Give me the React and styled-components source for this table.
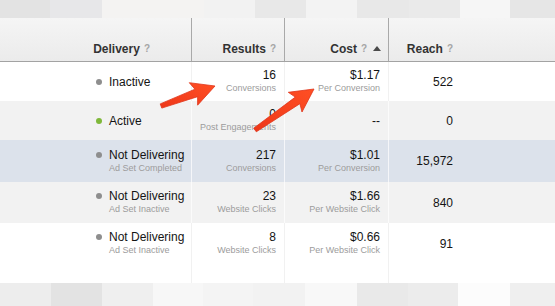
import styled, { createGlobalStyle } from "styled-components";

const GlobalStyle = createGlobalStyle`
    html, body {
        margin: 0;
        padding: 0;
        background: #ffffff;
    }
    body {
        font-family: "Liberation Sans", Arial, Helvetica, sans-serif;
        -webkit-font-smoothing: antialiased;
    }
`;

const colunas = "192px 93px 104px 72px 1fr";

const topoBlocos = [
    [50, "#e3e3e3"], [52, "#e7e7e9"], [102, "#f4f3f2"], [51, "#f2f2f2"], [51, "#e8e8e8"],
    [51, "#f3f3f3"], [52, "#e8e8e8"], [51, "#eaeaea"], [50, "#f6f6f6"], [45, "#e6e6e6"],
];

const baseBlocos = [
    [51, "#ededed"], [51, "#e3e3e3"], [51, "#efefef"], [50, "#f7f7f7"], [50, "#f4f4f4"],
    [52, "#f2f2f2"], [52, "#f8f8f8"], [51, "#e9e9e9"], [50, "#ececec"], [52, "#fcfcfc"], [45, "#efefef"],
];

const linhas = [
    { status: "Inactive", ativo: false, motivo: null, resultado: "16", tipo: "Conversions", custo: "$1.17", por: "Per Conversion", alcance: "522", tom: "branco", altura: 39 },
    { status: "Active", ativo: true, motivo: null, resultado: "0", tipo: "Post Engagements", custo: "--", por: null, alcance: "0", tom: "cinza", altura: 39 },
    { status: "Not Delivering", ativo: false, motivo: "Ad Set Completed", resultado: "217", tipo: "Conversions", custo: "$1.01", por: "Per Conversion", alcance: "15,972", tom: "azul", altura: 42 },
    { status: "Not Delivering", ativo: false, motivo: "Ad Set Inactive", resultado: "23", tipo: "Website Clicks", custo: "$1.66", por: "Per Website Click", alcance: "840", tom: "cinza", altura: 41 },
    { status: "Not Delivering", ativo: false, motivo: "Ad Set Inactive", resultado: "8", tipo: "Website Clicks", custo: "$0.66", por: "Per Website Click", alcance: "91", tom: "branco", altura: 41 },
];

const setas = [
    { de: [161, 106], ate: [215, 86] },
    { de: [255, 130], ate: [314, 89] },
];

// seta no estilo Skitch: cauda fina, corpo que engrossa, ponta larga
function pontosSeta({ de, ate }) {
    const [x1, y1] = de;
    const [x2, y2] = ate;
    const dx = x2 - x1;
    const dy = y2 - y1;
    const L = Math.hypot(dx, dy);
    const ux = dx / L, uy = dy / L;
    const nx = -uy, ny = ux;
    const h = 20, hw = 12, nw = 4, tw = 2.2;
    const cx = x2 - ux * h, cy = y2 - uy * h;
    const bx = x2 - ux * (h + 3), by = y2 - uy * (h + 3);
    const p = [
        [x1 + nx * tw, y1 + ny * tw],
        [cx + nx * nw, cy + ny * nw],
        [bx + nx * hw, by + ny * hw],
        [x2, y2],
        [bx - nx * hw, by - ny * hw],
        [cx - nx * nw, cy - ny * nw],
        [x1 - nx * tw, y1 - ny * tw],
    ];
    return p.map(([a, b]) => `${a.toFixed(1)},${b.toFixed(1)}`).join(" ");
}

function corLinha(tom) {
    if (tom === "azul") return "#dce2eb";
    if (tom === "cinza") return "#f2f2f2";
    return "#ffffff";
}

function corDivisor(tom) {
    if (tom === "branco") return "#f1f1f1";
    return "rgba(255, 255, 255, 0.7)";
}

function App() {
    return (
        <>
            <GlobalStyle />
            <Pagina>
                <Faixa altura={18}>
                    {topoBlocos.map(([w, c], i) => (
                        <Bloco key={i} largura={w} cor={c} />
                    ))}
                </Faixa>

                <Cabecalho>
                    <Titulo recuo={41} divisor>Delivery<Ajuda>?</Ajuda></Titulo>
                    <Titulo recuo={8} divisor>Results<Ajuda>?</Ajuda></Titulo>
                    <Titulo recuo={7} divisor>Cost<Ajuda>?</Ajuda><Seta /></Titulo>
                    <Titulo recuo={8}>Reach<Ajuda>?</Ajuda></Titulo>
                    <div />
                </Cabecalho>

                {linhas.map((l, i) => (
                    <Linha key={i} tom={l.tom} altura={l.altura}>
                        <Status tom={l.tom}>
                            <div>
                                <Principal>
                                    <Ponto ativo={l.ativo} />
                                    {l.status}
                                </Principal>
                                {l.motivo && <Sub recuo>{l.motivo}</Sub>}
                            </div>
                        </Status>
                        <Valor tom={l.tom}>
                            <Principal>{l.resultado}</Principal>
                            <Sub>{l.tipo}</Sub>
                        </Valor>
                        <Valor tom={l.tom}>
                            <Principal>{l.custo}</Principal>
                            {l.por && <Sub>{l.por}</Sub>}
                        </Valor>
                        <Valor tom={l.tom} sozinho>
                            <Principal>{l.alcance}</Principal>
                        </Valor>
                        <div />
                    </Linha>
                ))}

                <Linha tom="branco" altura={19}>
                    <Status tom="branco" />
                    <Valor tom="branco" />
                    <Valor tom="branco" />
                    <Valor tom="branco" sozinho />
                    <div />
                </Linha>

                <Faixa cresce>
                    {baseBlocos.map(([w, c], i) => (
                        <Bloco key={i} largura={w} cor={c} />
                    ))}
                </Faixa>

                <Setas viewBox="0 0 555 306" width="555" height="306">
                    <defs>
                        <linearGradient id="vermelho" x1="0" y1="1" x2="1" y2="0">
                            <stop offset="0" stopColor="#ee3719" />
                            <stop offset="1" stopColor="#ff4f24" />
                        </linearGradient>
                    </defs>
                    {setas.map((s, i) => (
                        <polygon key={i} points={pontosSeta(s)} fill="url(#vermelho)" stroke="#e0351a" strokeWidth="0.8" strokeLinejoin="round" />
                    ))}
                </Setas>
            </Pagina>
        </>
    );
}

const Pagina = styled.div`
    position: relative;
    width: 555px;
    height: 306px;
    display: flex;
    flex-direction: column;
    overflow: hidden;
    background: #ffffff;
`
const Faixa = styled.div`
    display: flex;
    height: ${(props) => (props.altura ? `${props.altura}px` : "auto")};
    flex: ${(props) => (props.cresce ? 1 : "none")};
`
const Bloco = styled.div`
    width: ${(props) => props.largura}px;
    flex: none;
    background-color: ${(props) => props.cor};
`
const Cabecalho = styled.div`
    display: grid;
    grid-template-columns: ${colunas};
    height: 44px;
    box-sizing: border-box;
    border-bottom: 1px solid #a3a3a3;
    background: linear-gradient(#f5f5f5, #ebebeb);
`
const Titulo = styled.div`
    display: flex;
    align-items: flex-end;
    justify-content: flex-end;
    padding: 0 ${(props) => props.recuo}px 5px 0;
    border-right: ${(props) => (props.divisor ? "1px solid #a9a9a9" : "none")};
    font-size: 12px;
    line-height: 14px;
    font-weight: bold;
    color: #333333;
`
const Ajuda = styled.span`
    font-size: 10px;
    line-height: 14px;
    color: #a5a5a5;
    margin-left: 4px;
`
const Seta = styled.span`
    width: 0;
    height: 0;
    margin: 0 0 5px 6px;
    border-left: 4px solid transparent;
    border-right: 4px solid transparent;
    border-bottom: 5px solid #4a4a4a;
`
const Linha = styled.div`
    display: grid;
    grid-template-columns: ${colunas};
    height: ${(props) => props.altura}px;
    background-color: ${(props) => corLinha(props.tom)};
`
const Status = styled.div`
    display: flex;
    align-items: center;
    padding-left: 96px;
    border-right: 1px solid ${(props) => corDivisor(props.tom)};
`
const Valor = styled.div`
    display: flex;
    flex-direction: column;
    justify-content: center;
    align-items: flex-end;
    padding-right: 8px;
    border-right: ${(props) => (props.sozinho ? "none" : `1px solid ${corDivisor(props.tom)}`)};
`
const Principal = styled.div`
    display: flex;
    align-items: center;
    font-size: 12px;
    line-height: 14px;
    color: #141414;
    white-space: nowrap;
`
const Sub = styled.div`
    font-size: 9px;
    line-height: 13px;
    color: #9c9c9c;
    white-space: nowrap;
    padding-left: ${(props) => (props.recuo ? "13px" : "0")};
`
const Ponto = styled.span`
    width: 6px;
    height: 6px;
    border-radius: 50%;
    margin-right: 7px;
    flex: none;
    background-color: ${(props) => (props.ativo ? "#7fb83a" : "#8e8e8e")};
`
const Setas = styled.svg`
    position: absolute;
    left: 0;
    top: 0;
    pointer-events: none;
`

export default App;
